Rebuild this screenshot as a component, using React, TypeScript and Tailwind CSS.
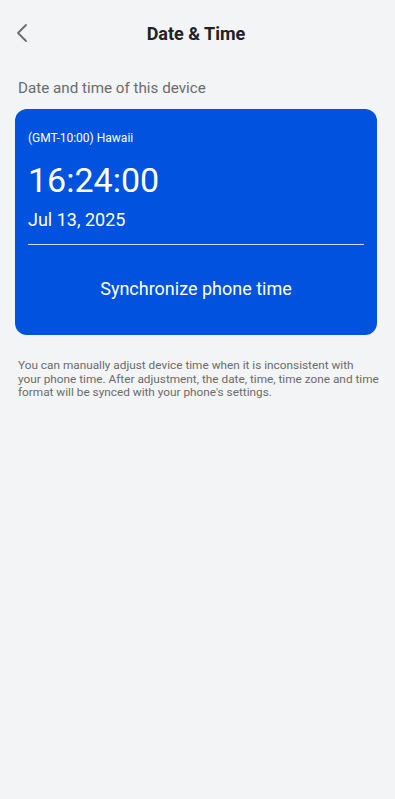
import React from "react";

export default function App() {
  return (
    <div
      className="w-[395px] h-[799px] bg-[#f3f4f6] overflow-hidden"
      style={{ fontFamily: "Roboto, 'Noto Sans', sans-serif" }}
    >
      <div className="w-[392px]">
        <div className="relative h-[66px] flex items-center justify-center">
          <div className="absolute left-[14px] top-[23px]">
            <svg width="16" height="20" viewBox="0 0 16 20" fill="none">
              <path d="M12 2 L4 10 L12 18" stroke="#6b6b6b" strokeWidth="1.8" strokeLinecap="round" strokeLinejoin="round" />
            </svg>
          </div>
          <div className="text-[18px] font-bold text-[#222]">Date &amp; Time</div>
        </div>
        <div className="mt-[12px] px-[18px] text-[15.2px] leading-[20px] text-[#6b6b6b]">
          Date and time of this device
        </div>
        <div className="mt-[11px] ml-[15px] mr-[15px] h-[226px] rounded-[12px] bg-[#0052df] text-white flex flex-col">
          <div className="px-[13px] pt-[21px]">
            <div className="text-[12px] leading-[16px]">(GMT-10:00) Hawaii</div>
            <div className="mt-[14px] text-[34px] leading-[40px]">16:24:00</div>
            <div className="mt-[8px] text-[18px] leading-[24px]">Jul 13, 2025</div>
            <div className="mt-[12px] h-px bg-white/80" />
          </div>
          <div className="flex-1 flex items-center justify-center pb-[4px] text-[18px]">
            Synchronize phone time
          </div>
        </div>
        <div className="mt-[24px] pl-[18px] pr-[4px] text-[11.8px] leading-[13.5px] text-[#6b6b6b] whitespace-nowrap">
          You can manually adjust device time when it is inconsistent with
          <br />
          your phone time. After adjustment, the date, time, time zone and time
          <br />
          format will be synced with your phone's settings.
        </div>
      </div>
    </div>
  );
}
